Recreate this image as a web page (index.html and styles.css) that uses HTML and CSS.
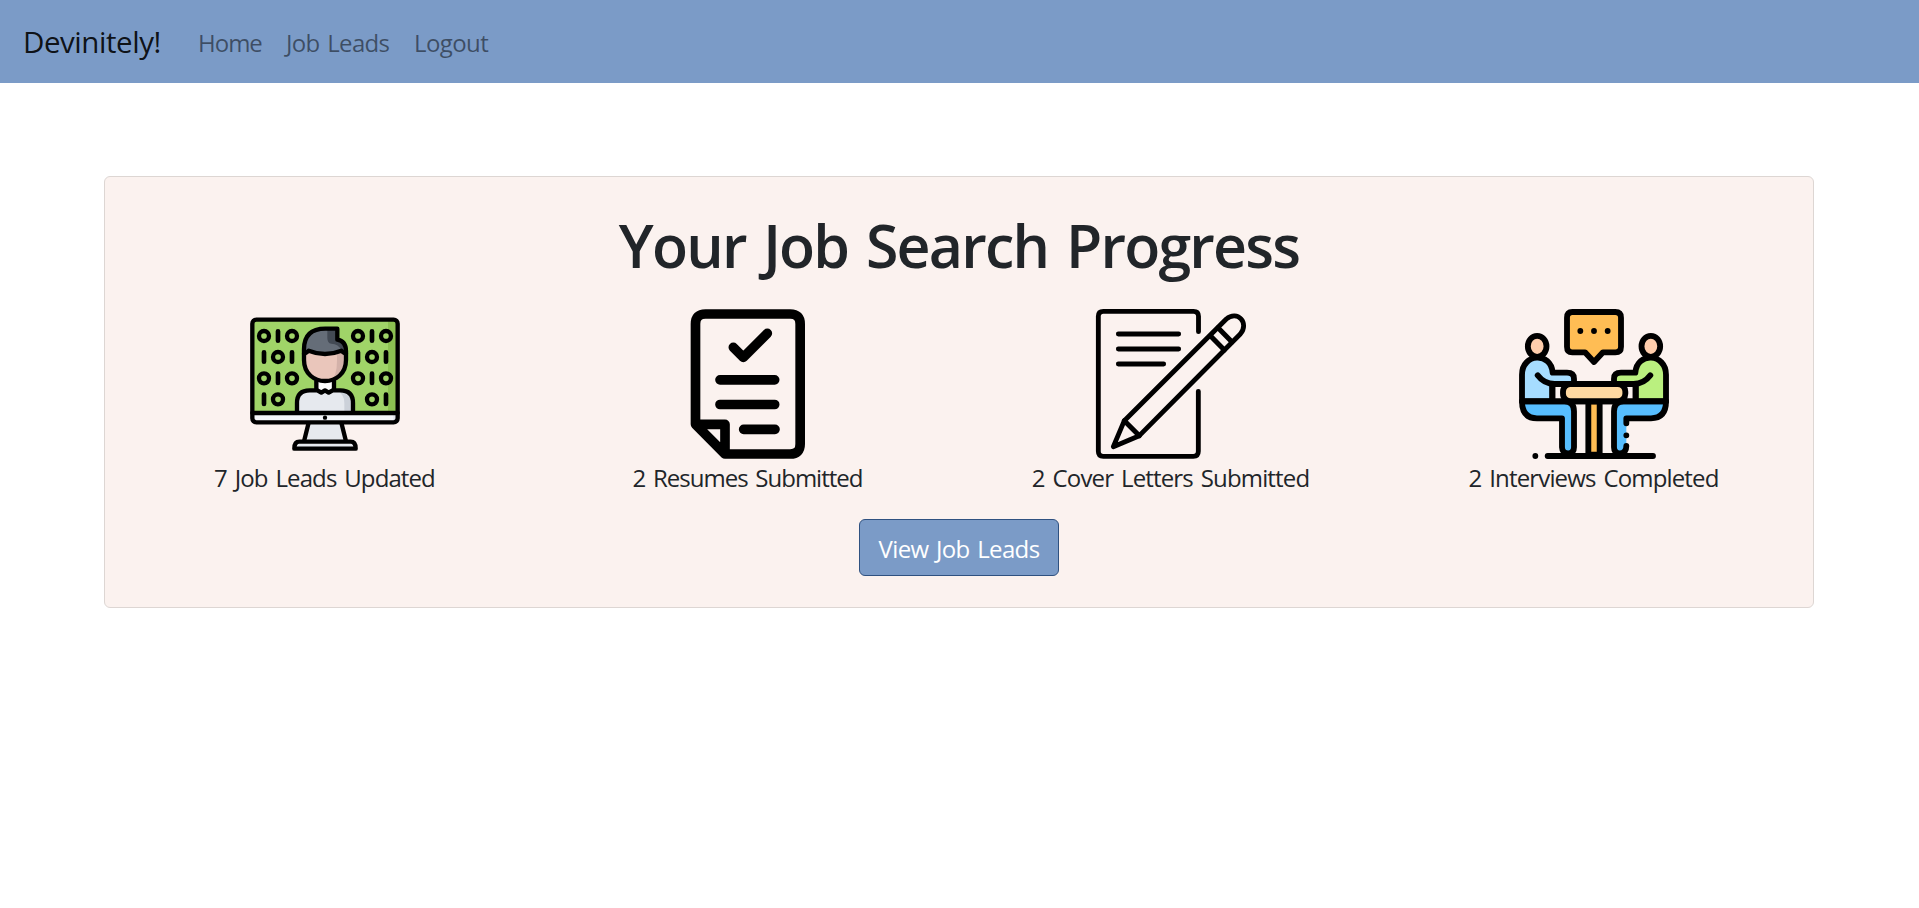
FILE: index.html
```
<!DOCTYPE html>
<html lang="en">
<head>
<meta charset="utf-8">
<title>Devinitely!</title>
<link rel="stylesheet" href="styles.css">
</head>
<body>
<nav class="navbar">
  <a class="brand">Devinitely!</a>
  <a class="nav-link home">Home</a>
  <a class="nav-link leads">Job Leads</a>
  <a class="nav-link logout">Logout</a>
</nav>
<main class="card">
  <h1 class="title">Your Job Search Progress</h1>
  <div class="stats">
    <div class="stat">
      <svg class="icon" viewBox="30 27 450 450">
        <rect x="37" y="59" width="436" height="308" rx="12" fill="#a0d468"/>
        <path d="M444 59h24v280h-24z" fill="#8cc152"/>
        <path d="M37 339h436v22q0 6-6 6H43q-6 0-6-6z" fill="#f5f7fa"/>
        <path d="M460 339h13v28h-13z" fill="#e0e3ea"/>
        <path d="M206 372h98l14 51H190zM164 431h182v16H164z" fill="#e6e9ee"/>
        <path d="M230 240h50v30h-50z" fill="#fff"/>
        <path d="M171 339v-30q0-38 38-38h23l12 8 11-8 11 8 12-8h23q38 0 38 38v30z" fill="#e6e9ee"/>
        <path d="M290 271h11q38 0 38 38v24h-26v-24q0-27-23-38z" fill="#ccd1d9"/>
        <path d="M192 145h126v34q0 68-63 68t-63-68z" fill="#eac6bb"/>
        <path d="M291 150h27v32q0 57-47 64 20-17 20-64z" fill="#d3b1a9"/>
        <path d="M192 158v-16q0-56 64-56h36v33q26 4 26 35v8q-9-3-14-11-47 20-96 0z" fill="#656d78"/>
        <path d="M262 86h30v33q26 4 26 35v8q-9-3-14-11-8-19-30-20-12-1-12-18z" fill="#434a54"/>
        <g fill="none" stroke="#000" stroke-width="13" stroke-linejoin="round" stroke-linecap="round">
          <rect x="37" y="59" width="436" height="308" rx="12"/>
          <path d="M37 339h436M205 372l-12 48M305 372l12 48"/>
          <path d="M178 425h154q15 0 15 21H163q0-21 15-21z"/>
          <path d="M192 148v32c0 84 126 84 126 0v-26q0-31-26-35V86h-36q-64 0-64 62z"/>
          <path d="M192 162q8-3 14-10 49 20 98 0 6 7 14 10M229 243v24M282 243v24"/>
          <path d="M171 334v-25q0-38 38-38h23l12 7 11-7 11 7 12-7h23q38 0 38 38v25"/>
        </g>
        <circle cx="255" cy="353" r="6.5"/>
        <g fill="none" stroke="#000" stroke-width="13">
          <circle cx="72" cy="108" r="15"/><circle cx="156" cy="108" r="15"/><circle cx="354" cy="108" r="15"/><circle cx="438" cy="108" r="15"/>
          <circle cx="114" cy="171" r="15"/><circle cx="396" cy="171" r="15"/>
          <circle cx="72" cy="235" r="15"/><circle cx="156" cy="235" r="15"/><circle cx="354" cy="235" r="15"/><circle cx="438" cy="235" r="15"/>
          <circle cx="114" cy="298" r="15"/><circle cx="396" cy="298" r="15"/>
        </g>
        <path d="M114 94v28M396 94v28M72 157v28M156 157v28M354 157v28M438 157v28M114 221v28M396 221v28M72 284v28M438 284v28" stroke="#000" stroke-width="14" stroke-linecap="round"/>
      </svg>
      <p class="label leads-label">7 Job Leads Updated</p>
    </div>
    <div class="stat">
      <svg class="icon" viewBox="10 27 450 450">
        <g fill="none" stroke="#000" stroke-width="29" stroke-linejoin="round" stroke-linecap="round">
          <path d="M77.500 373V72q0-30 30-30h254q30 0 30 30v360q0 30-30 30H166zM80 373h86v86"/>
          <path d="M191 142l30 30 72-72M151 239.500h164M151 313.500h164M222 388h94"/>
        </g>
      </svg>
      <p class="label resumes-label">2 Resumes Submitted</p>
    </div>
    <div class="stat">
      <svg class="icon" viewBox="33 27 450 450">
        <g fill="none" stroke="#000" stroke-width="14.500" stroke-linejoin="round" stroke-linecap="round">
          <path d="M340.500 95V49q0-15-15-15H55q-15 0-15 15v405q0 15 15 15h270q15 0 15-15V274"/>
          <path d="M100 102h181M100 147h181M100 192h136"/>
          <path d="M85 440l33-78L424 57c33-28 70 12 42 45L163 407z"/>
          <path d="M118 362l45 45M376 107l42 43M399 83l42 43" stroke-width="15"/>
        </g>
      </svg>
      <p class="label letters-label">2 Cover Letters Submitted</p>
    </div>
    <div class="stat">
      <svg class="icon" viewBox="42 27 450 450">
        <g stroke="#000" stroke-width="17.500" stroke-linejoin="round" stroke-linecap="round">
          <path d="M202 36h129q17 0 17 17v87q0 17-17 17h-37l-27 29-27-29h-38q-16 0-16-17V53q0-17 16-17z" fill="#ffbd54"/>
          <ellipse cx="96.500" cy="139" rx="28" ry="31.500" fill="#ffcdac"/>
          <ellipse cx="437.500" cy="139" rx="28" ry="31.500" fill="#ffcdac"/>
          <path d="M51 304v-80c0-64 87-70 92-6h43q21 0 21 18v16h-65v52z" fill="#a6ddff"/>
          <path d="M483 304v-80c0-64-87-70-92-6h-43q-21 0-21 18v16h65v52z" fill="#baf07f"/>
          <path d="M98 226q20 27 53 26h232q33 1 53-26" fill="none"/>
          <path d="M51 304h127q29 0 29 30v108q0 18-17.500 18T171 442v-87H96q-45 0-45-51z" fill="#57beff"/>
          <path d="M364 355v105h-20q-17 0-17-18V334q0-30 29-30h127q0 51-45 51z" fill="#57beff" stroke="none"/>
          <path d="M364 370v-15h74q45 0 45-51H356q-29 0-29 30v108q0 18 17 18 20 0 20-22M364 406v.1" fill="none"/>
          <path d="M250 304h34v160h-34z" fill="#ffbd54"/>
          <rect x="174" y="252" width="187" height="52" rx="23" fill="#ffd9a1"/>
          <path d="M142 252v52M392 252v52M51 304h432M91 468v.1M128 468h316" fill="none"/>
          <path d="M226 93v.1M267 93v.1M308 93v.1" fill="none"/>
        </g>
      </svg>
      <p class="label interviews-label">2 Interviews Completed</p>
    </div>
  </div>
  <a class="button">View Job Leads</a>
</main>
</body>
</html>
```

FILE: styles.css
```
* { box-sizing: border-box; }
body {
  margin: 0;
  background: #fff;
  color: #212529;
  font-family: "Open Sans", "Noto Sans", sans-serif;
  font-size: 24px;
  line-height: 36px;
}
.navbar {
  display: flex;
  align-items: baseline;
  height: 83px;
  padding: 18px 23px;
  background: #7b9bc7;
  white-space: nowrap;
}
.brand {
  width: 175px;
  color: rgba(0, 0, 0, .9);
  font-size: 29.5px;
  line-height: 47px;
  letter-spacing: -.45px;
}
.nav-link {
  position: relative;
  top: -1px;
  color: rgba(0, 0, 0, .5);
  letter-spacing: -.8px;
  word-spacing: 2px;
}
.home { width: 88px; letter-spacing: -1px; }
.leads { width: 128px; letter-spacing: -.65px; }
.logout { letter-spacing: -.6px; }
.card {
  display: flex;
  flex-direction: column;
  align-items: center;
  width: 1710px;
  height: 432px;
  margin: 93px 0 0 104px;
  padding: 32px 8px 0;
  border: 1px solid #ddd6d3;
  border-radius: 6px;
  background: #fbf2ef;
}
.title {
  margin: 0 0 28px;
  font-size: 59px;
  font-weight: 600;
  line-height: 72px;
  letter-spacing: -1.75px;
  word-spacing: 4px;
  white-space: nowrap;
}
.stats {
  display: grid;
  grid-template-columns: repeat(4, 1fr);
  width: 100%;
}
.stat {
  display: flex;
  flex-direction: column;
  align-items: center;
}
.icon {
  display: block;
  width: 150px;
  height: 150px;
  overflow: visible;
}
.label {
  margin: 1px 0 23px;
  letter-spacing: -.85px;
  word-spacing: 2.5px;
  white-space: nowrap;
}
.leads-label { letter-spacing: -.9px; }
.resumes-label { letter-spacing: -1px; }
.button {
  width: 200px;
  height: 57px;
  padding-top: 11px;
  border: 1px solid #2f5180;
  border-radius: 6px;
  background: #7b9bc7;
  color: #fff;
  letter-spacing: -.65px;
  word-spacing: 2px;
  text-align: center;
}
```
